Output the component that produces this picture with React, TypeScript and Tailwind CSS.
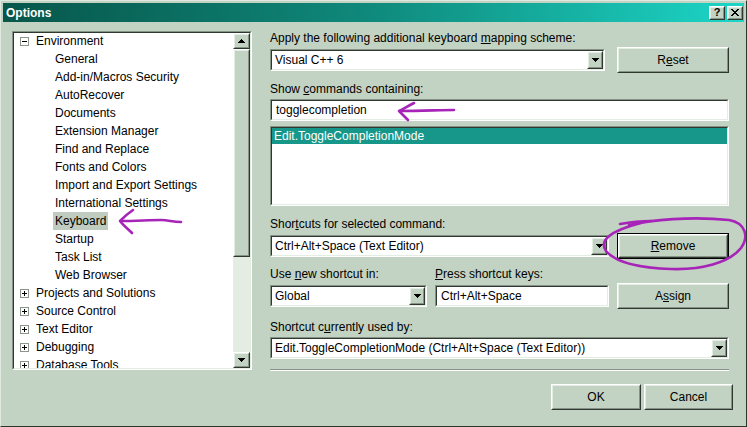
import React from "react";

type BoxProps = { className?: string; innerClassName?: string; children?: React.ReactNode };

function Raised({ className = "", innerClassName = "", children }: BoxProps) {
  return (
    <div className={"border border-t-white border-l-white border-r-[#2f382f] border-b-[#2f382f] bg-[#c3d3c3] " + className}>
      <div className={"w-full h-full border border-t-[#e4ede4] border-l-[#e4ede4] border-r-[#879387] border-b-[#879387] flex items-center justify-center " + innerClassName}>
        {children}
      </div>
    </div>
  );
}

function Sunken({ className = "", innerClassName = "", children }: BoxProps) {
  return (
    <div className={"border border-t-[#879387] border-l-[#879387] border-r-white border-b-white " + className}>
      <div className={"w-full h-full border border-t-[#2f382f] border-l-[#2f382f] border-r-[#e4ede4] border-b-[#e4ede4] bg-white overflow-hidden " + innerClassName}>
        {children}
      </div>
    </div>
  );
}

function DownArrow() {
  return (
    <svg width="7" height="4" viewBox="0 0 7 4" shapeRendering="crispEdges">
      <path d="M0 0h7v1h-1v1h-1v1h-1v1h-1v-1h-1v-1h-1v-1h-1z" fill="#000" />
    </svg>
  );
}

function UpArrow() {
  return (
    <svg width="7" height="4" viewBox="0 0 7 4" shapeRendering="crispEdges">
      <path d="M3 0h1v1h1v1h1v1h1v1h-7v-1h1v-1h1v-1h1z" fill="#000" />
    </svg>
  );
}

function Combo({ className = "", text }: { className?: string; text: string }) {
  return (
    <Sunken className={"h-[22px] " + className} innerClassName="flex items-center">
      <span className="flex-1 pl-[3px] whitespace-nowrap overflow-hidden">{text}</span>
      <Raised className="w-[16px] h-full">
        <DownArrow />
      </Raised>
    </Sunken>
  );
}

function Expander({ plus }: { plus: boolean }) {
  return (
    <svg width="9" height="9" viewBox="0 0 9 9" shapeRendering="crispEdges">
      <rect x="0.5" y="0.5" width="8" height="8" fill="#fff" stroke="#8a968a" />
      <path d="M2 4.5h5" stroke="#000" />
      {plus && <path d="M4.5 2v5" stroke="#000" />}
    </svg>
  );
}

type Node = { level: number; text: string; exp?: "plus" | "minus"; sel?: boolean };

const tree: Node[] = [
  { level: 0, text: "Environment", exp: "minus" },
  { level: 1, text: "General" },
  { level: 1, text: "Add-in/Macros Security" },
  { level: 1, text: "AutoRecover" },
  { level: 1, text: "Documents" },
  { level: 1, text: "Extension Manager" },
  { level: 1, text: "Find and Replace" },
  { level: 1, text: "Fonts and Colors" },
  { level: 1, text: "Import and Export Settings" },
  { level: 1, text: "International Settings" },
  { level: 1, text: "Keyboard", sel: true },
  { level: 1, text: "Startup" },
  { level: 1, text: "Task List" },
  { level: 1, text: "Web Browser" },
  { level: 0, text: "Projects and Solutions", exp: "plus" },
  { level: 0, text: "Source Control", exp: "plus" },
  { level: 0, text: "Text Editor", exp: "plus" },
  { level: 0, text: "Debugging", exp: "plus" },
  { level: 0, text: "Database Tools", exp: "plus" },
];

export default function App() {
  return (
    <div className="relative w-[747px] h-[427px] overflow-hidden bg-[#c3d3c3] border border-t-[#dfe9df] border-l-[#dfe9df] border-r-[#2f382f] border-b-[#2f382f] p-[2px] flex flex-col font-['Liberation_Sans',Arial,sans-serif] text-[12px] leading-[14px] text-black">
      {/* Title bar */}
      <div className="h-[19px] shrink-0 bg-linear-to-r from-[#07564a] via-[#0f8a7c] to-[#1cd6c7] flex items-center justify-between pl-[3px] pr-[1px]">
        <span className="text-white font-bold text-[12px]">Options</span>
        <div className="flex gap-[2px]">
          <Raised className="w-[16px] h-[14px]">
            <span className="font-bold text-[11px] leading-none">?</span>
          </Raised>
          <Raised className="w-[16px] h-[14px]">
            <svg width="8" height="7" viewBox="0 0 8 7" shapeRendering="crispEdges">
              <path d="M0.5 0 L7.5 7 M7.5 0 L0.5 7" stroke="#000" strokeWidth="1.6" />
            </svg>
          </Raised>
        </div>
      </div>

      {/* Body */}
      <div className="flex pl-[9px] pt-[9px]">
        {/* Tree */}
        <Sunken className="w-[240px] h-[339px] shrink-0" innerClassName="flex">
          <div className="flex-1 flex flex-col overflow-hidden -mt-px">
            {tree.map((n, i) => (
              <div key={i} className={"h-[18px] shrink-0 flex items-center whitespace-nowrap " + (n.level === 0 ? "pl-[6px]" : "pl-[39px]")}>
                {n.level === 0 && (
                  <>
                    <Expander plus={n.exp === "plus"} />
                    <span className="ml-[7px]">{n.text}</span>
                  </>
                )}
                {n.level === 1 && (
                  <span className={"px-[2px] h-[18px] flex items-center " + (n.sel ? "bg-[#c0ccc0]" : "")}>{n.text}</span>
                )}
              </div>
            ))}
          </div>
          <div className="w-[17px] shrink-0 flex flex-col bg-[#e4ece4]">
            <Raised className="h-[16px] w-full">
              <UpArrow />
            </Raised>
            <Raised className="h-[208px] w-full" />
            <div className="flex-1" />
            <Raised className="h-[16px] w-full">
              <DownArrow />
            </Raised>
          </div>
        </Sunken>

        {/* Right column */}
        <div className="ml-[18px] w-[459px] flex flex-col">
          <div className="h-[14px]">
            Apply the following additional keyboard <span className="underline">m</span>apping scheme:
          </div>
          <div className="mt-[2px] h-[26px] flex items-center justify-between">
            <Combo className="w-[335px]" text="Visual C++ 6" />
            <Raised className="w-[112px] h-[26px]">
              <span>
                R<span className="underline">e</span>set
              </span>
            </Raised>
          </div>

          <div className="mt-[9px] h-[14px]">
            Show <span className="underline">c</span>ommands containing:
          </div>
          <Sunken className="mt-[3px] h-[22px] w-full" innerClassName="flex items-center">
            <span className="pl-[4px]">togglecompletion</span>
          </Sunken>
          <Sunken className="mt-[5px] h-[80px] w-full">
            <div className="h-[16px] bg-[#17978a] text-white pl-[2px] flex items-center">Edit.ToggleCompletionMode</div>
          </Sunken>

          <div className="mt-[11px] h-[14px]">
            Shor<span className="underline">t</span>cuts for selected command:
          </div>
          <div className="mt-[2px] h-[26px] flex items-center justify-between">
            <Combo className="w-[339px]" text="Ctrl+Alt+Space (Text Editor)" />
            <div className="w-[112px] h-[26px] border border-black">
              <Raised className="w-full h-full">
                <span>
                  <span className="underline">R</span>emove
                </span>
              </Raised>
            </div>
          </div>

          <div className="mt-[8px] h-[14px] flex">
            <div className="w-[165px]">
              Use <span className="underline">n</span>ew shortcut in:
            </div>
            <div>
              <span className="underline">P</span>ress shortcut keys:
            </div>
          </div>
          <div className="mt-[2px] h-[26px] flex items-center">
            <Combo className="w-[157px]" text="Global" />
            <Sunken className="ml-[8px] w-[174px] h-[22px]" innerClassName="flex items-center">
              <span className="pl-[4px]">Ctrl+Alt+Space</span>
            </Sunken>
            <Raised className="ml-auto w-[112px] h-[26px]">
              <span>
                A<span className="underline">s</span>sign
              </span>
            </Raised>
          </div>

          <div className="mt-[11px] h-[14px]">
            Shortcut c<span className="underline">u</span>rrently used by:
          </div>
          <Combo className="mt-[3px] w-full" text="Edit.ToggleCompletionMode (Ctrl+Alt+Space (Text Editor))" />

          <div className="mt-[10px] h-[2px] border-t border-t-[#879387] border-b border-b-white" />

          <div className="mt-[13px] flex justify-end gap-[3px] -mr-[4px]">
            <Raised className="w-[90px] h-[26px]">OK</Raised>
            <Raised className="w-[89px] h-[26px]">Cancel</Raised>
          </div>
        </div>
      </div>

      {/* Purple annotations */}
      <svg className="absolute left-0 top-0 pointer-events-none" width="747" height="427" viewBox="0 0 747 427">
        <g fill="none" stroke="#a624b8" strokeWidth="2.6" strokeLinecap="round" strokeLinejoin="round">
          <path d="M120 220 C135 220 148 219 160 219 C168 219 171 221 180 221" />
          <path d="M132 209 C126 213 122 217 119 220 C122 224 127 228 131 232" />
          <path d="M399 110 C420 110 440 109 453 109" />
          <path d="M413 102 C407 105 402 108 398 110 C401 113 404 116 407 119" />
          <path d="M619 223 C630 221 640 220 650 220" />
          <path d="M628 224 C650 219 690 215 728 219 C745 222 748 236 740 247 C728 262 700 269 670 268 C640 267 615 262 605 250 C598 240 608 230 640 222" />
        </g>
      </svg>
    </div>
  );
}
